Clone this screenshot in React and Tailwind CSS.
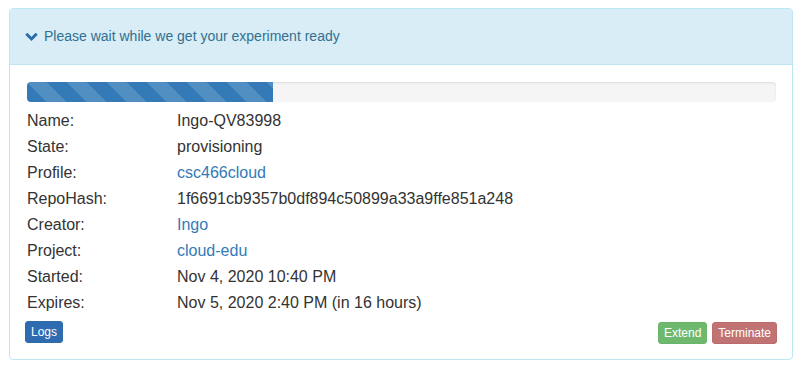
export default function App() {
  const rows = [
    { label: "Name:", value: "Ingo-QV83998" },
    { label: "State:", value: "provisioning" },
    { label: "Profile:", value: "csc466cloud", link: true },
    { label: "RepoHash:", value: "1f6691cb9357b0df894c50899a33a9ffe851a248" },
    { label: "Creator:", value: "Ingo", link: true },
    { label: "Project:", value: "cloud-edu", link: true },
    { label: "Started:", value: "Nov 4, 2020 10:40 PM" },
    { label: "Expires:", value: "Nov 5, 2020 2:40 PM (in 16 hours)" },
  ];

  return (
    <div className="w-[802px] h-[380px] bg-white pt-[8px] pl-[9px] font-['Liberation_Sans',Arial,sans-serif] text-[#333]">
      {/* Panel */}
      <div className="w-[784px] border border-[#bce8f1] rounded-[4px] overflow-hidden">
        {/* Heading */}
        <div className="h-[56px] bg-[#d9edf7] border-b border-[#bce8f1] flex items-center pl-[15px] gap-[6px] text-[#31708f] text-[14px]">
          <svg className="w-[13px] h-[10px] mt-[1px]" viewBox="0 0 13 10">
            <polyline points="1.3,1.8 6.5,7 11.7,1.8" fill="none" stroke="#2b6ca8" strokeWidth="3" strokeLinejoin="miter" />
          </svg>
          <span>Please wait while we get your experiment ready</span>
        </div>

        {/* Body */}
        <div className="pt-[17px] pl-[17px] pr-[16px] pb-[15px]">
          <div className="h-[20px] w-full bg-[#f5f5f5] rounded-[4px] overflow-hidden shadow-[inset_0_1px_2px_rgba(0,0,0,0.1)]">
            <div className="h-full w-[246px] bg-[#337ab7] bg-[linear-gradient(45deg,rgba(255,255,255,.15)_25%,transparent_25%,transparent_50%,rgba(255,255,255,.15)_50%,rgba(255,255,255,.15)_75%,transparent_75%,transparent)] bg-[length:40px_40px]" />
          </div>

          <div className="mt-[6px] text-[16px]">
            {rows.map((r) => (
              <div key={r.label} className="flex h-[26px] items-center">
                <div className="w-[150px]">{r.label}</div>
                <div className={r.link ? "text-[#337ab7]" : ""}>{r.value}</div>
              </div>
            ))}
          </div>

          <div className="flex justify-between items-start mt-[5px] -ml-[2px]">
            <button className="h-[22px] px-[5px] bg-[#2f6bb0] border border-[#2e6da4] rounded-[3px] text-white text-[12px] font-medium">
              Logs
            </button>
            <div className="flex gap-[5px] mt-[1px] mr-[-1px]">
              <button className="h-[22px] px-[5px] bg-[#6fb96f] border border-[#6ab46a] rounded-[3px] text-white text-[12px] font-medium">
                Extend
              </button>
              <button className="h-[22px] px-[5px] bg-[#c07372] border border-[#ba6d6c] rounded-[3px] text-white text-[12px] font-medium">
                Terminate
              </button>
            </div>
          </div>
        </div>
      </div>
    </div>
  );
}
